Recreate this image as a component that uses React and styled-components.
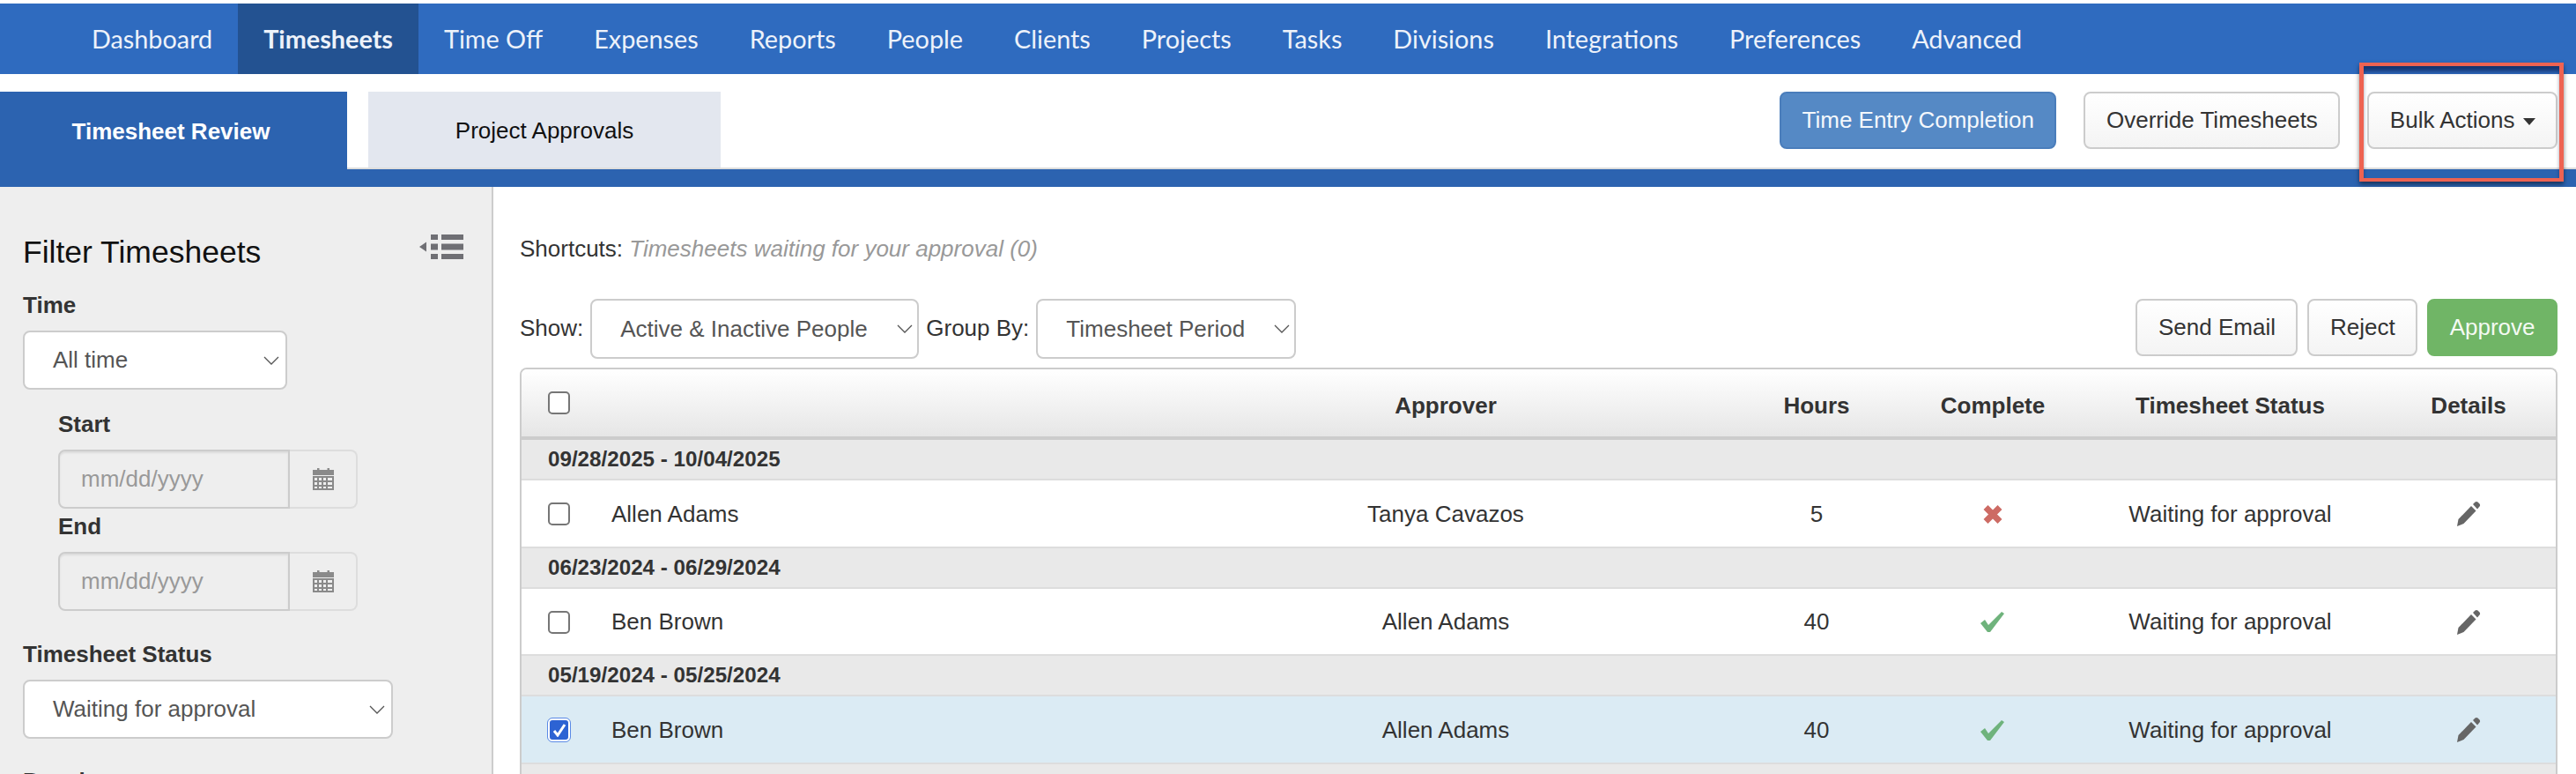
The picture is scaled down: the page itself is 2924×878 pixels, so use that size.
import styled, { createGlobalStyle } from 'styled-components';

const GlobalStyle = createGlobalStyle`
  html, body {
    margin: 0;
    padding: 0;
    background: #fff;
  }
  * {
    box-sizing: border-box;
  }
  body {
    font-family: 'Liberation Sans', Arial, sans-serif;
    font-size: 26px;
    color: #333;
  }
`;

const Page = styled.div`
  width: 2924px;
  height: 878px;
  overflow: hidden;
  padding-top: 4px;
`;

const TopNav = styled.nav`
  display: flex;
  height: 80px;
  padding-left: 75px;
  background: #2f6bbf;
`;

const NavItem = styled.a`
  display: flex;
  align-items: center;
  padding: 0 29px;
  font-family: Lato, sans-serif;
  font-size: 28.8px;
  font-weight: ${(p) => (p.$active ? 700 : 400)};
  color: #edf2fa;
  background: ${(p) => (p.$active ? '#235291' : 'transparent')};
`;

const SubNav = styled.div`
  display: flex;
  justify-content: space-between;
  height: 108px;
  padding: 20px 21px 0 0;
  border-bottom: 2px solid #ddd;
`;

const Tabs = styled.div`
  display: flex;
  gap: 24px;
`;

const Tab = styled.a`
  display: flex;
  align-items: center;
  justify-content: center;
  width: ${(p) => (p.$active ? '394px' : '400px')};
  height: ${(p) => (p.$active ? '88px' : '86px')};
  padding: 2px ${(p) => (p.$active ? '6px' : '0')} 0 0;
  font-weight: ${(p) => (p.$active ? 700 : 400)};
  color: ${(p) => (p.$active ? '#fff' : '#111')};
  background: ${(p) => (p.$active ? '#2c63b0' : '#e3e7ef')};
`;

const SubActions = styled.div`
  display: flex;
  gap: 31px;
`;

const Button = styled.button`
  height: 65px;
  padding: 0 23.5px;
  font: inherit;
  color: #333;
  white-space: nowrap;
  background: linear-gradient(#fff, #f4f4f4);
  border: 2px solid #ccc;
  border-radius: 8px;
`;

const PrimaryButton = styled(Button)`
  color: #f4f8fc;
  background: #5589c5;
  border-color: #4a7dbb;
`;

const SuccessButton = styled(Button)`
  color: #f4faf3;
  background: #70b566;
  border-color: #70b566;
`;

const Highlighted = styled.div`
  position: relative;
`;

const Annotation = styled.div`
  position: absolute;
  inset: -33px -7px -16px -9px;
  border: 5px solid #ee6352;
  border-width: 4px 5px;
  box-shadow: 0 3px 5px rgba(0, 0, 0, 0.5), inset 0 7px 5px -1px rgba(0, 10, 50, 0.55);
  pointer-events: none;
`;

const Caret = styled.span`
  display: inline-block;
  margin-left: 9px;
  vertical-align: 3px;
  border-top: 8px solid #333;
  border-left: 7.5px solid transparent;
  border-right: 7.5px solid transparent;
`;

const Band = styled.div`
  height: 20px;
  background: #2c63b0;
`;

const Body = styled.div`
  display: flex;
  height: 666px;
`;

const Sidebar = styled.aside`
  flex: 0 0 560px;
  padding: 54px 32px 0 26px;
  background: #eee;
  border-right: 2px solid #ccc;
`;

const SidebarHead = styled.div`
  display: flex;
  align-items: flex-start;
  justify-content: space-between;
  margin-bottom: 25px;
`;

const SidebarTitle = styled.h2`
  margin: 0;
  font-size: 35.5px;
  font-weight: 400;
  line-height: 40px;
  color: #111;
`;

const FieldLabel = styled.label`
  display: block;
  margin: ${(p) => p.$top || '0'} 0 14px;
  font-weight: 700;
  line-height: 30px;
`;

const Nested = styled.div`
  width: 340px;
  margin-left: 40px;
`;

const SelectBox = styled.div`
  display: flex;
  align-items: center;
  justify-content: space-between;
  width: ${(p) => p.$width};
  height: ${(p) => p.$height || '67px'};
  padding: 0 ${(p) => p.$right || '7px'} 0 32px;
  color: #555;
  background: #fff;
  border: 2px solid #ccc;
  border-radius: 8px;
`;

const DateGroup = styled.div`
  display: flex;
  height: 67px;
`;

const DateInput = styled.input`
  flex: 0 0 263px;
  width: 263px;
  padding: 0 0 0 24px;
  font: inherit;
  color: #555;
  background: #eee;
  border: 2px solid #ccc;
  border-radius: 8px 0 0 8px;
  box-shadow: inset 0 2px 2px rgba(0, 0, 0, 0.075);
  outline: none;

  &::placeholder {
    color: #999;
    opacity: 1;
  }
`;

const DateAddon = styled.div`
  display: flex;
  flex: 1;
  align-items: center;
  justify-content: center;
  background: #eee;
  border: 2px solid #ddd;
  border-left: 0;
  border-radius: 0 8px 8px 0;
`;

const Main = styled.main`
  flex: 1;
  min-width: 0;
  padding: 55px 21px 0 30px;
`;

const Shortcuts = styled.div`
  line-height: 30px;
  color: #333;

  em {
    color: #999;
  }
`;

const Toolbar = styled.div`
  display: flex;
  justify-content: space-between;
  height: 78px;
  margin-top: 42px;
`;

const ToolGroup = styled.div`
  display: flex;
  gap: ${(p) => p.$gap};
  align-items: flex-start;
`;

const ToolLabel = styled.span`
  align-self: center;
  margin-top: -12px;
`;

const Table = styled.div`
  border: 2px solid #ccc;
  border-bottom: 0;
  border-radius: 8px 8px 0 0;
  overflow: hidden;
`;

const Row = styled.div`
  display: grid;
  grid-template-columns: 730px 638px 204px 196px 343px 198px;
  align-items: center;
  height: 76.5px;
  padding-top: 2px;
  border-bottom: 2px solid #ddd;
  background: ${(p) => (p.$selected ? '#dbebf4' : '#fff')};
`;

const HeadRow = styled(Row)`
  height: 80px;
  padding-top: 6px;
  font-weight: 700;
  background: linear-gradient(#fff, #e6e6e6);
  border-bottom: 4px solid #ccc;
`;

const GroupRow = styled.div`
  display: flex;
  align-items: center;
  height: 46px;
  padding-left: 30px;
  font-size: 24.2px;
  font-weight: 700;
  background: #e9e9e9;
  border-bottom: 2px solid #ddd;
`;

const Cell = styled.div`
  display: flex;
  justify-content: center;
  align-items: center;
`;

const NameCell = styled.div`
  display: flex;
  gap: 47px;
  align-items: center;
  padding-left: 30px;
`;

const HeadCheckCell = styled(NameCell)`
  margin-top: -7px;
`;

const Check = styled.div`
  display: flex;
  flex: 0 0 25px;
  align-items: center;
  justify-content: center;
  width: 25px;
  height: 26px;
  background: ${(p) => (p.$checked ? '#2d63d3' : '#fff')};
  border: 2px solid ${(p) => (p.$checked ? '#fff' : '#767676')};
  border-radius: 5px;
  outline: ${(p) => (p.$checked ? '1px solid #5b8ae6' : 'none')};
`;

const Chevron = () => (
  <svg width="18" height="10" viewBox="0 0 18 10" fill="none">
    <path d="M1 1l8 8 8-8" stroke="#555" strokeWidth="1.3" />
  </svg>
);

const ListToggle = () => (
  <svg width="50" height="28" viewBox="0 0 50 28" fill="#6f6f74">
    <path d="M8 8.500v11L0 14z" />
    <rect x="13" y="0" width="8" height="6" />
    <rect x="13" y="10.500" width="8" height="7" />
    <rect x="13" y="22" width="8" height="6" />
    <rect x="25" y="0" width="25" height="6" />
    <rect x="25" y="10.500" width="25" height="7" />
    <rect x="25" y="22" width="25" height="6" />
  </svg>
);

const CalendarIcon = () => (
  <svg width="24" height="25" viewBox="0 0 24 25" fill="#8a8a8a">
    <rect x="5" y="0" width="2.500" height="4" />
    <rect x="16.500" y="0" width="2.500" height="4" />
    <rect x="0" y="2" width="24" height="6" />
    <path
      fillRule="evenodd"
      d="M0 9h24v16H0zM2 11v3h3v-3zm5 0v3h3v-3zm5 0v3h3v-3zm5 0v3h5v-3zM2 16v3h3v-3zm5 0v3h3v-3zm5 0v3h3v-3zm5 0v3h5v-3zM2 21v2h3v-2zm5 0v2h3v-2zm5 0v2h3v-2zm5 0v2h5v-2z"
    />
  </svg>
);

const RemoveIcon = () => (
  <svg width="22" height="21" viewBox="0 0 22 21" fill="none">
    <path d="M3 2.500l16 16M19 2.500l-16 16" stroke="#cd6b64" strokeWidth="7" />
  </svg>
);

const OkIcon = () => (
  <svg width="28" height="23" viewBox="0 0 28 23" fill="#6fb37c">
    <path d="M0 13l5-4 4 6L24 0l3 2L11 23H8z" />
  </svg>
);

const PencilIcon = () => (
  <svg width="28" height="30" viewBox="0 0 28 30" fill="#666">
    <path d="M1 29l1.500-8L17 6l5.500 5.500L8.500 26z" />
    <path d="M19 4l2.500-2.500c1-.8 2-.8 3 0l2 2c.8 1 .8 2 0 3L24 9.500z" />
  </svg>
);

const WhiteCheck = () => (
  <svg width="16" height="16" viewBox="0 0 16 16" fill="none">
    <path d="M2 9l4 5 8-12" stroke="#fff" strokeWidth="3" />
  </svg>
);

const navLinks = [
  'Dashboard',
  'Timesheets',
  'Time Off',
  'Expenses',
  'Reports',
  'People',
  'Clients',
  'Projects',
  'Tasks',
  'Divisions',
  'Integrations',
  'Preferences',
  'Advanced',
];

const timesheets = [
  { period: '09/28/2025 - 10/04/2025', name: 'Allen Adams', approver: 'Tanya Cavazos', hours: 5, complete: false },
  { period: '06/23/2024 - 06/29/2024', name: 'Ben Brown', approver: 'Allen Adams', hours: 40, complete: true },
  { period: '05/19/2024 - 05/25/2024', name: 'Ben Brown', approver: 'Allen Adams', hours: 40, complete: true, selected: true },
];

function App() {
  return (
    <Page>
      <GlobalStyle />
      <TopNav>
        {navLinks.map((link) => (
          <NavItem key={link} $active={link === 'Timesheets'}>
            {link}
          </NavItem>
        ))}
      </TopNav>
      <SubNav>
        <Tabs>
          <Tab $active>Timesheet Review</Tab>
          <Tab>Project Approvals</Tab>
        </Tabs>
        <SubActions>
          <PrimaryButton>Time Entry Completion</PrimaryButton>
          <Button>Override Timesheets</Button>
          <Highlighted>
            <Button>
              Bulk Actions
              <Caret />
            </Button>
            <Annotation />
          </Highlighted>
        </SubActions>
      </SubNav>
      <Band />
      <Body>
        <Sidebar>
          <SidebarHead>
            <SidebarTitle>Filter Timesheets</SidebarTitle>
            <ListToggle />
          </SidebarHead>
          <FieldLabel>Time</FieldLabel>
          <SelectBox $width="300px">
            All time
            <Chevron />
          </SelectBox>
          <Nested>
            <FieldLabel $top="24px">Start</FieldLabel>
            <DateGroup>
              <DateInput placeholder="mm/dd/yyyy" />
              <DateAddon>
                <CalendarIcon />
              </DateAddon>
            </DateGroup>
            <FieldLabel $top="5px">End</FieldLabel>
            <DateGroup>
              <DateInput placeholder="mm/dd/yyyy" />
              <DateAddon>
                <CalendarIcon />
              </DateAddon>
            </DateGroup>
          </Nested>
          <FieldLabel $top="34px">Timesheet Status</FieldLabel>
          <SelectBox $width="420px">
            Waiting for approval
            <Chevron />
          </SelectBox>
          <FieldLabel $top="33px">People</FieldLabel>
        </Sidebar>
        <Main>
          <Shortcuts>
            Shortcuts: <em>Timesheets waiting for your approval (0)</em>
          </Shortcuts>
          <Toolbar>
            <ToolGroup $gap="8px">
              <ToolLabel>Show:</ToolLabel>
              <SelectBox $width="373px" $height="68px" $right="5px">
                Active &amp; Inactive People
                <Chevron />
              </SelectBox>
              <ToolLabel>Group By:</ToolLabel>
              <SelectBox $width="295px" $height="68px" $right="5px">
                Timesheet Period
                <Chevron />
              </SelectBox>
            </ToolGroup>
            <ToolGroup $gap="11px">
              <Button>Send Email</Button>
              <Button>Reject</Button>
              <SuccessButton>Approve</SuccessButton>
            </ToolGroup>
          </Toolbar>
          <Table>
            <HeadRow>
              <HeadCheckCell>
                <Check />
              </HeadCheckCell>
              <Cell>Approver</Cell>
              <Cell>Hours</Cell>
              <Cell>Complete</Cell>
              <Cell>Timesheet Status</Cell>
              <Cell>Details</Cell>
            </HeadRow>
            {timesheets.map((sheet) => (
              <div key={sheet.period}>
                <GroupRow>{sheet.period}</GroupRow>
                <Row $selected={sheet.selected}>
                  <NameCell>
                    <Check $checked={sheet.selected}>{sheet.selected && <WhiteCheck />}</Check>
                    {sheet.name}
                  </NameCell>
                  <Cell>{sheet.approver}</Cell>
                  <Cell>{sheet.hours}</Cell>
                  <Cell>{sheet.complete ? <OkIcon /> : <RemoveIcon />}</Cell>
                  <Cell>Waiting for approval</Cell>
                  <Cell>
                    <PencilIcon />
                  </Cell>
                </Row>
              </div>
            ))}
            <GroupRow />
          </Table>
        </Main>
      </Body>
    </Page>
  );
}

export default App;
